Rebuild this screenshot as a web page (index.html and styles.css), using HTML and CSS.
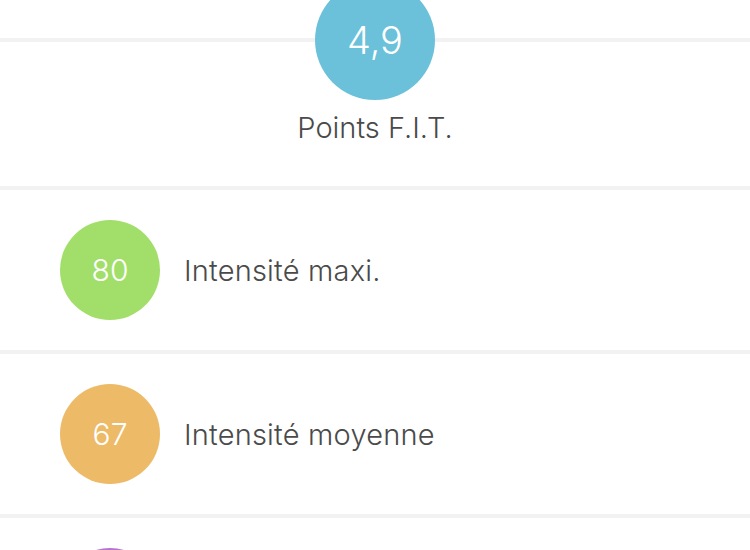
FILE: index.html
```html
<!DOCTYPE html>
<html lang="fr">
<head>
<meta charset="utf-8">
<link rel="stylesheet" href="styles.css">
</head>
<body>
<div class="top"></div>
<section class="summary">
  <div class="badge badge-big blue">4,9</div>
  <div class="summary-label">Points F.I.T.</div>
</section>
<section class="row">
  <div class="badge green">80</div>
  <div class="row-label">Intensité maxi.</div>
</section>
<section class="row">
  <div class="badge orange">67</div>
  <div class="row-label">Intensité moyenne</div>
</section>
<section class="row">
  <div class="badge purple"></div>
  <div class="row-label"></div>
</section>
</body>
</html>
```
FILE: styles.css
```css
html, body {
  margin: 0;
  padding: 0;
  background: #ffffff;
  overflow: hidden;
}
body {
  width: 750px;
  height: 550px;
  font-family: Inter, Roboto, "Liberation Sans", sans-serif;
  font-weight: 300;
  color: #4a4a4a;
}
.top {
  height: 38px;
}
.summary {
  border-top: 4px solid #f2f2f2;
  height: 144px;
  display: flex;
  flex-direction: column;
  align-items: center;
}
.badge {
  width: 100px;
  height: 100px;
  border-radius: 50%;
  display: flex;
  align-items: center;
  justify-content: center;
  color: #ffffff;
  font-size: 30px;
  flex-shrink: 0;
}
.badge-big {
  width: 120px;
  height: 120px;
  margin-top: -62px;
  font-size: 38px;
  position: relative;
}
.summary-label {
  margin-top: 8px;
  font-size: 29px;
  line-height: 40px;
}
.blue { background: #6bc1d9; }
.green { background: #a2df6a; }
.orange { background: #edba68; }
.purple { background: #b872cf; }
.row {
  border-top: 4px solid #f2f2f2;
  height: 160px;
  display: flex;
  align-items: center;
  padding-left: 60px;
  gap: 24px;
}
.row-label {
  font-size: 29px;
  letter-spacing: 0.2px;
}
```
